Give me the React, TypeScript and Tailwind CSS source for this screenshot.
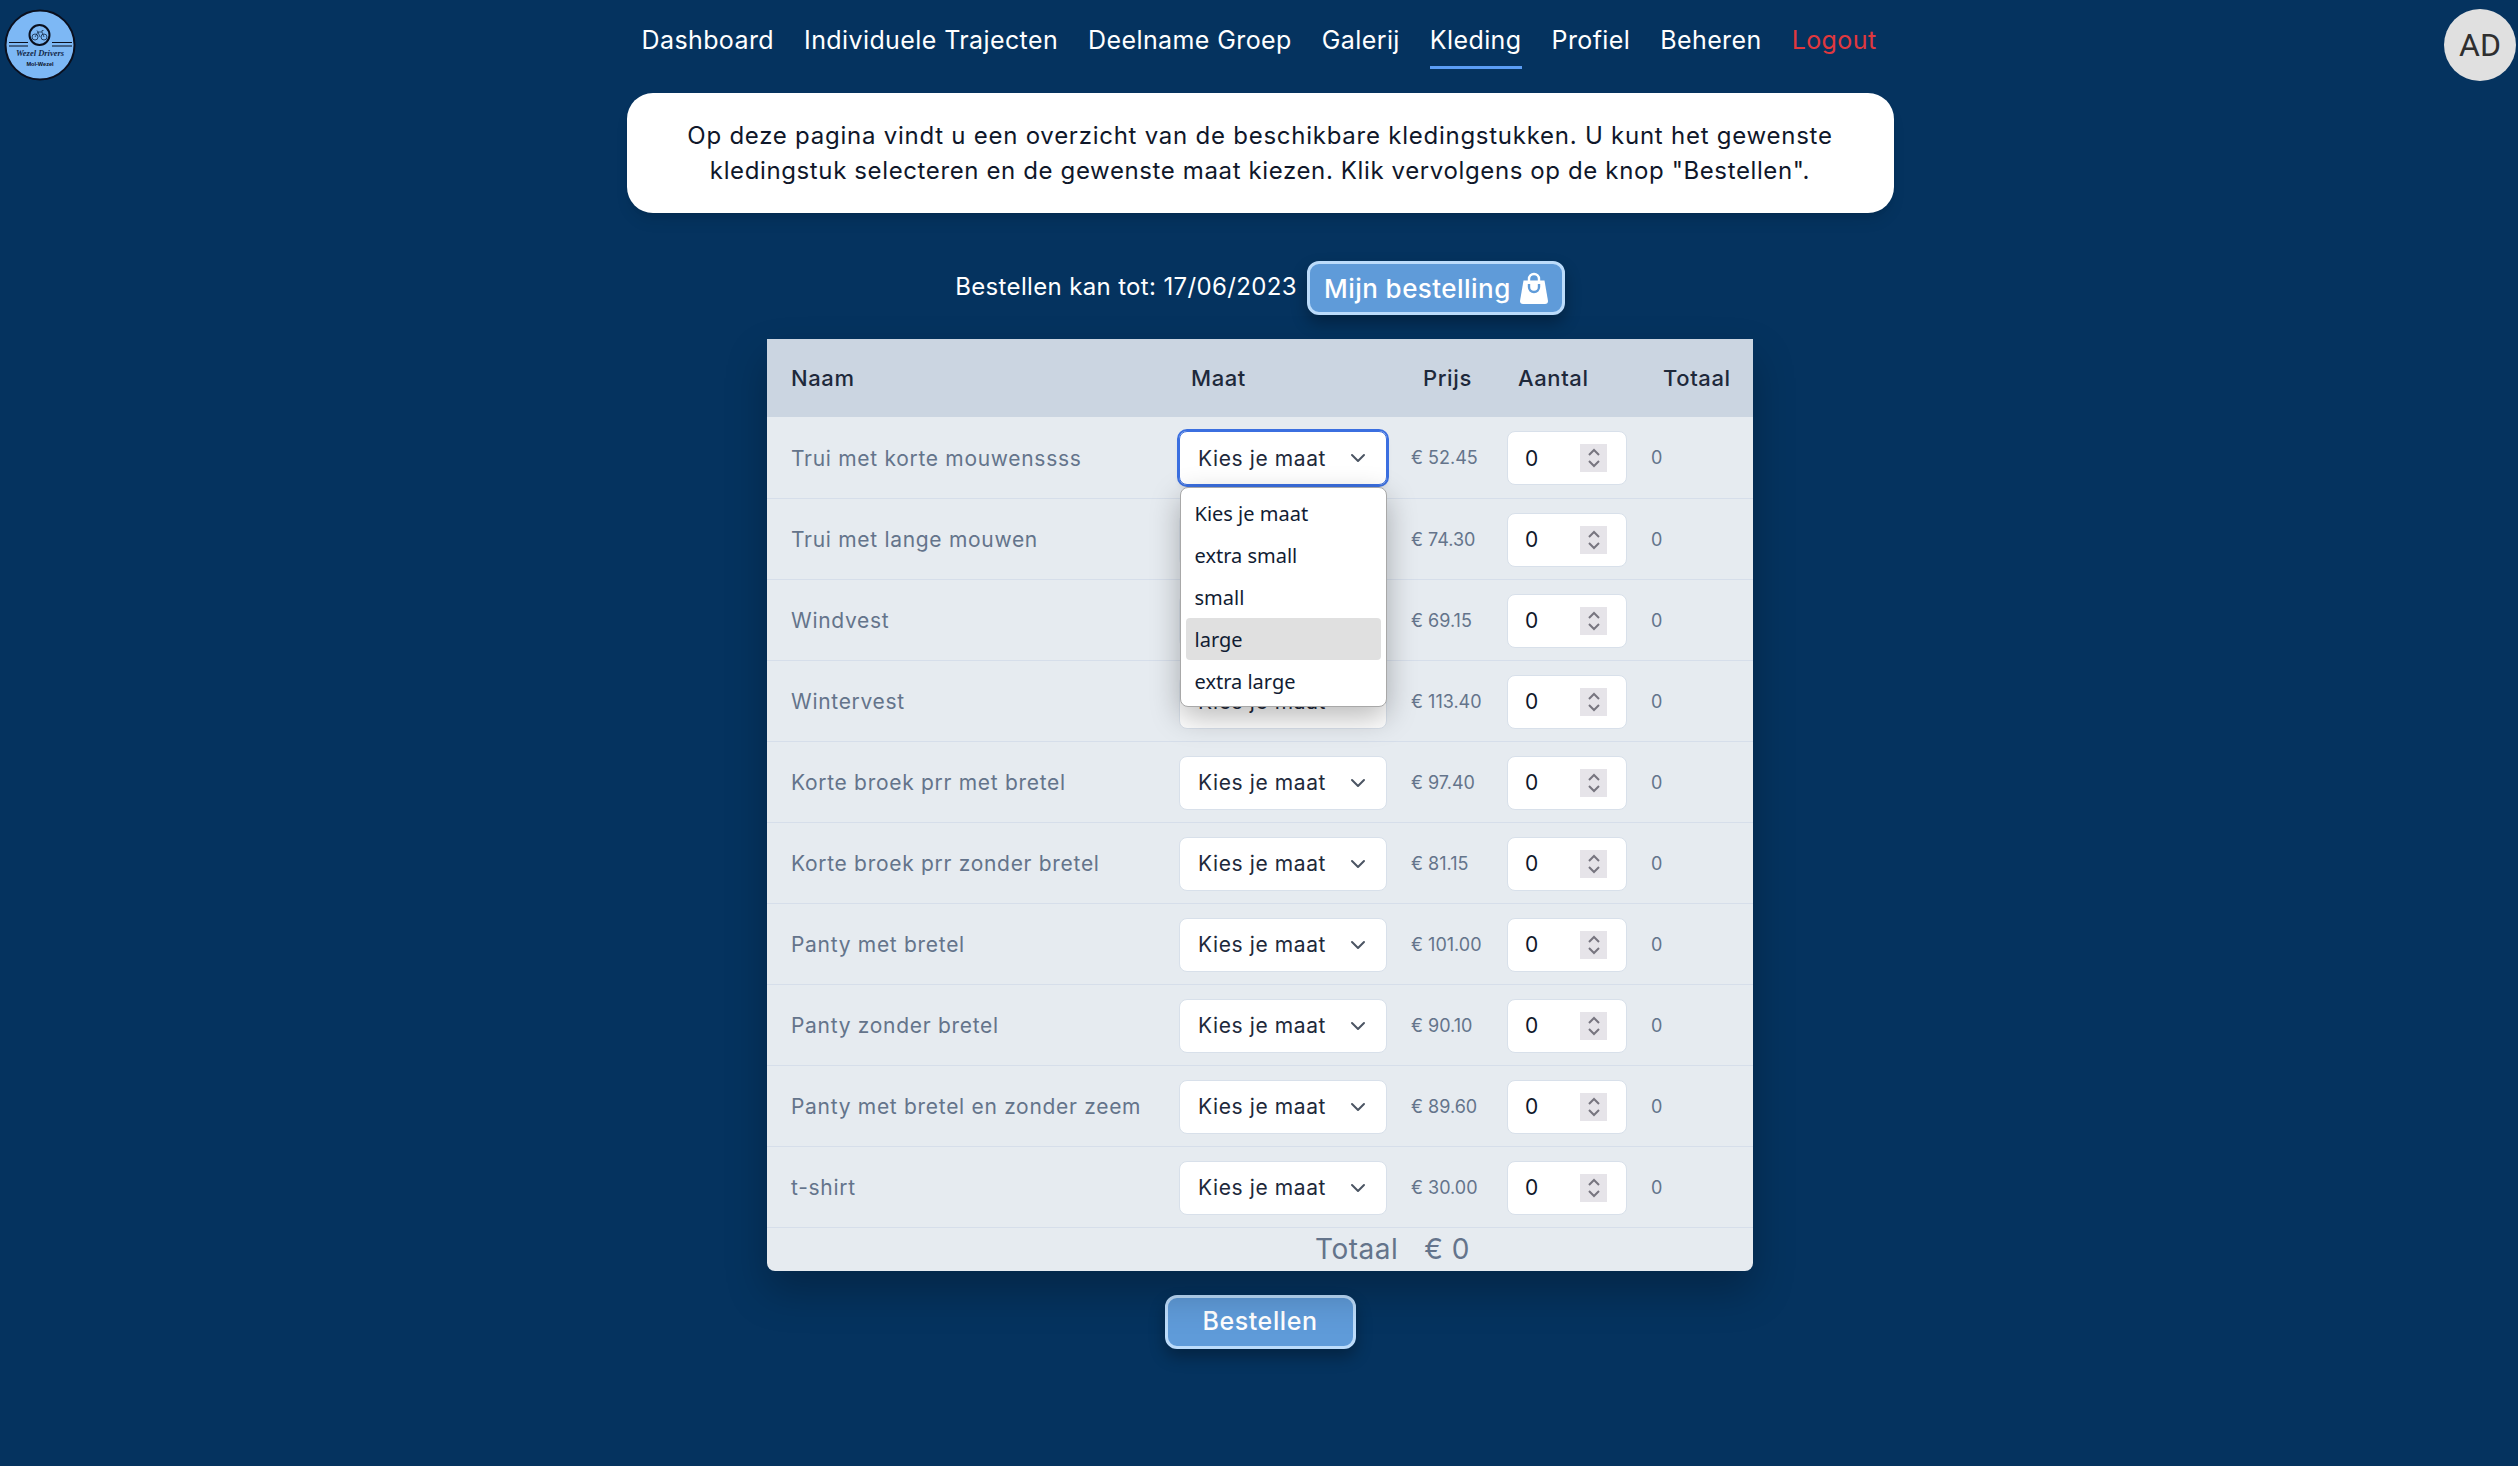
import { ChevronDown } from "lucide-react";

const FONT = "font-['Inter',sans-serif]";

const NAV = [
  "Dashboard",
  "Individuele Trajecten",
  "Deelname Groep",
  "Galerij",
  "Kleding",
  "Profiel",
  "Beheren",
];

const ITEMS = [
  { naam: "Trui met korte mouwenssss", prijs: "€ 52.45" },
  { naam: "Trui met lange mouwen", prijs: "€ 74.30" },
  { naam: "Windvest", prijs: "€ 69.15" },
  { naam: "Wintervest", prijs: "€ 113.40" },
  { naam: "Korte broek prr met bretel", prijs: "€ 97.40" },
  { naam: "Korte broek prr zonder bretel", prijs: "€ 81.15" },
  { naam: "Panty met bretel", prijs: "€ 101.00" },
  { naam: "Panty zonder bretel", prijs: "€ 90.10" },
  { naam: "Panty met bretel en zonder zeem", prijs: "€ 89.60" },
  { naam: "t-shirt", prijs: "€ 30.00" },
];

const MATEN = ["Kies je maat", "extra small", "small", "large", "extra large"];

function Logo() {
  return (
    <svg viewBox="0 0 72 72" className="h-[72px] w-[72px]">
      <circle cx="36" cy="36" r="34.5" fill="#7db8f5" stroke="#0a0f1e" strokeWidth="2" />
      <circle cx="35.5" cy="26" r="10" fill="#7db8f5" stroke="#0a0f1e" strokeWidth="2" />
      <circle cx="31" cy="28" r="3" fill="none" stroke="#0f2340" strokeWidth="0.8" />
      <circle cx="40" cy="28" r="3" fill="none" stroke="#0f2340" strokeWidth="0.8" />
      <path d="M31 28l3-5h4l2 5M34 23l-1-1.5M38 23l0-1.5h1.5M34 23l2 5" fill="none" stroke="#0f2340" strokeWidth="0.7" />
      <path d="M5 33.5h19M5 37h19M48 33.5h20M48 37h20" stroke="#0a0f1e" strokeWidth="1.2" />
      <text x="36" y="47" textAnchor="middle" fontSize="8.5" fontStyle="italic" fontWeight="700" fontFamily="'Liberation Serif', serif" fill="#12284a">
        Wezel Drivers
      </text>
      <text x="36" y="56.5" textAnchor="middle" fontSize="5.6" fontWeight="700" fontFamily="'Liberation Sans', sans-serif" fill="#0a0f1e">
        Mol-Wezel
      </text>
    </svg>
  );
}

function BagIcon() {
  return (
    <svg viewBox="0 0 28 32" className="h-8 w-7" fill="none">
      <path d="M9 11V7a5 5 0 0 1 10 0v4" stroke="#fff" strokeWidth="2.4" />
      <path d="M3.5 8.5h21L28 29a3 3 0 0 1-3 3H3a3 3 0 0 1-3-3z" fill="#fff" />
      <path d="M9 12v3a5 5 0 0 0 10 0v-3" stroke="#5f9bd9" strokeWidth="2.4" />
    </svg>
  );
}

function MaatSelect({ open }: { open?: boolean }) {
  return (
    <div
      className={`relative flex h-[54px] w-[208px] items-center justify-between rounded-lg border bg-white pl-[18px] pr-[16px] text-[21px] tracking-[0.6px] text-[#1e293b] ${
        open ? "border-[#3b6fe0] outline-2 outline-[#3b6fe0] shadow-md" : "border-[#d8e0ea]"
      }`}
    >
      <span>Kies je maat</span>
      <ChevronDown className="h-6 w-6 text-[#4b5563]" strokeWidth={2} />
    </div>
  );
}

function Keuzelijst() {
  return (
    <div className="absolute left-[12.5px] top-[70px] z-10 w-[207px] rounded-lg border border-[#a8a8a8] bg-white px-[5px] py-[4px] font-['Noto_Sans',sans-serif] text-[20px] text-[#111c33] shadow-[0_10px_30px_rgba(0,0,0,0.28)]">
      {MATEN.map((m) => (
        <div
          key={m}
          className={`flex h-[42px] items-center rounded px-[9px] pt-[2px] ${m === "large" ? "bg-[#e0e0e0]" : ""}`}
        >
          {m}
        </div>
      ))}
    </div>
  );
}

function Aantal() {
  return (
    <div className="flex h-[54px] w-[120px] items-center justify-between rounded-lg border border-[#d8e0ea] bg-white pl-[17px] pr-[19px] text-[21px] text-[#0f172a]">
      <span>0</span>
      <span className="flex h-7 w-[27px] flex-col items-center justify-center bg-[#e6e4e9]">
        <svg viewBox="0 0 14 20" className="h-[22px] w-[14px]" fill="none" stroke="#77757f" strokeWidth="2">
          <path d="M2 7l5-5 5 5M2 13l5 5 5-5" />
        </svg>
      </span>
    </div>
  );
}

export default function App() {
  return (
    <div className={`min-h-screen bg-[#05335f] ${FONT}`}>
      <header className="relative flex h-[70px] items-start justify-center">
        <div className="absolute left-1 top-[9px]">
          <Logo />
        </div>
        <nav className="flex gap-[30px] pt-[23px] text-[25px] leading-[34px] tracking-[0.4px] text-white">
          {NAV.map((n) => (
            <a
              key={n}
              className={n === "Kleding" ? "h-[46px] border-b-[3px] border-[#5b9df5]" : "h-[46px]"}
            >
              {n}
            </a>
          ))}
          <a className="text-[#e0383e]">Logout</a>
        </nav>
        <div className="absolute right-[2px] top-[9px] flex h-[72px] w-[72px] items-center justify-center rounded-full bg-[#e0e0e0] font-['Roboto',sans-serif] text-[32px] text-[#2f2f2f]">
          AD
        </div>
      </header>

      <main className="flex flex-col items-center pl-[2px]">
        <section className="mt-[23px] flex h-[120px] w-[1267px] items-center justify-center rounded-[26px] bg-white px-10 text-center text-[24px] leading-[35px] tracking-[0.75px] text-[#0f172a] shadow-lg">
          <p>
            Op deze pagina vindt u een overzicht van de beschikbare kledingstukken. U kunt het gewenste
            <br />
            <span className="tracking-[0.62px]">
              kledingstuk selecteren en de gewenste maat kiezen. Klik vervolgens op de knop "Bestellen".
            </span>
          </p>
        </section>

        <div className="mt-[48px] flex h-[54px] items-center gap-[10px]">
          <span className="-mt-[3px] text-[24px] tracking-[0.35px] text-white">Bestellen kan tot: 17/06/2023</span>
          <button className="flex h-[54px] w-[258px] items-center justify-center gap-[9px] rounded-xl border-[3px] border-[#bcdcfb] bg-[#5f9bd9] text-[26px] font-medium tracking-[0.45px] text-white shadow-[0_8px_16px_rgba(0,0,0,0.3)]">
            Mijn bestelling
            <BagIcon />
          </button>
        </div>

        <div className="relative mt-[24px] w-[986px] rounded-b-lg bg-[#e6ebf0] shadow-[0_20px_40px_rgba(0,0,0,0.25)]">
          <table className="w-full table-fixed border-collapse">
            <colgroup>
              <col className="w-[400px]" />
              <col className="w-[232px]" />
              <col className="w-[96px]" />
              <col className="w-[144px]" />
              <col className="w-[114px]" />
            </colgroup>
            <thead>
              <tr className="h-[78px] bg-[#cbd5e1] text-left text-[22px] font-medium tracking-[0.6px] text-[#1e293b]">
                <th className="pl-6 font-medium">Naam</th>
                <th className="pl-6 font-medium">Maat</th>
                <th className="pl-6 font-medium">Prijs</th>
                <th className="pl-[23px] font-medium">Aantal</th>
                <th className="pl-6 font-medium">Totaal</th>
              </tr>
            </thead>
            <tbody>
              {ITEMS.map((item, i) => (
                <tr key={item.naam} className="h-[81px] border-b border-[#d6deea]">
                  <td className="pl-6 pt-[2px] text-[21px] tracking-[0.7px] text-[#64748b]">{item.naam}</td>
                  <td className="relative pl-[12px] pt-[2px]">
                    <MaatSelect open={i === 0} />
                    {i === 0 && <Keuzelijst />}
                  </td>
                  <td className="pl-3 pt-[1px] text-[18px] text-[#64748b]">{item.prijs}</td>
                  <td className="pl-[12px] pt-[2px]">
                    <Aantal />
                  </td>
                  <td className="pl-[12px] pt-[1px] text-[18px] text-[#64748b]">0</td>
                </tr>
              ))}
            </tbody>
          </table>
          <div className="flex h-[43px] items-center gap-[26px] pl-[548px] text-[28px] tracking-[0.5px] text-[#64748b]">
            <span>Totaal</span>
            <span>€ 0</span>
          </div>
        </div>

        <button className="mt-6 h-[54px] w-[191px] rounded-xl border-[3px] border-[#bcdcfb] bg-[#5f9bd9] text-[25px] font-medium tracking-[0.6px] text-white shadow-[0_8px_16px_rgba(0,0,0,0.3)]">
          Bestellen
        </button>
      </main>
    </div>
  );
}
